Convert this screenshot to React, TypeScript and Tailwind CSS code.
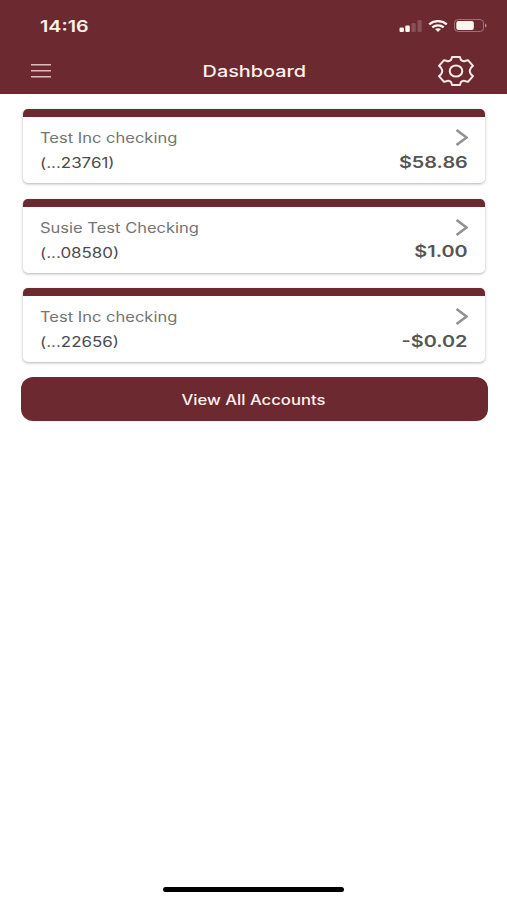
import { ReactNode } from 'react';

type Account = {
    name: string;
    number: string;
    balance: string;
};

const accounts: Account[] = [
    { name: 'Test Inc checking', number: '(...23761)', balance: '$58.86' },
    { name: 'Susie Test Checking', number: '(...08580)', balance: '$1.00' },
    { name: 'Test Inc checking', number: '(...22656)', balance: '-$0.02' },
];

function Signal() {
    return (
        <svg className="h-3 w-[23px]" viewBox="0 0 23 12" fill="#fff4ef">
            <rect x="0.5" y="7.5" width="4.5" height="4.5" rx="1.2" />
            <rect x="6.3" y="5.5" width="4.5" height="6.5" rx="1.2" />
            <rect x="12.5" y="3" width="4.2" height="9" rx="1.2" opacity="0.2" />
            <rect x="18.5" y="0" width="4.2" height="12" rx="1.2" opacity="0.2" />
        </svg>
    );
}

function Wifi() {
    return (
        <svg className="h-3 w-5" viewBox="0 0 20 12" fill="none" stroke="#fff4ef" strokeWidth="2.3">
            <path d="M1.2 4.4C6 0 14 0 18.8 4.4" />
            <path d="M4.3 7.4C7.4 4.6 12.6 4.6 15.7 7.4" />
            <path d="M7 9.1C8.8 7.8 11.2 7.8 13 9.1L10 12Z" fill="#fff4ef" stroke="none" />
        </svg>
    );
}

function Battery() {
    return (
        <svg className="h-[13px] w-[33px]" viewBox="0 0 33 13">
            <rect x="0.5" y="0.5" width="29" height="12" rx="3.5" fill="none" stroke="#fff4ef" opacity="0.35" />
            <rect x="2.3" y="2" width="17.5" height="9" rx="2" fill="#fff4ef" />
            <path d="M31 4.5C33 5.3 33 7.7 31 8.5Z" fill="#fff4ef" opacity="0.5" />
        </svg>
    );
}

function Gear() {
    return (
        <svg className="h-[30px] w-9" viewBox="0 0 36 30" fill="none" stroke="#fbeae6" strokeWidth="2" strokeLinejoin="round">
            <path d="M14 1h8l.8 2.8Q25 6 27.5 4.8L30 4.2 35 9.800 33 11.8Q30.5 15 33 18.2L35 20.2 30 25.8 27.5 25.2Q25 24 22.8 26.2L22 29h-8l-.8-2.8Q11 24 8.5 25.2L6 25.8 1 20.2 3 18.2Q5.5 15 3 11.8L1 9.8 6 4.2 8.5 4.8Q11 6 13.2 3.8Z" />
            <ellipse cx="18" cy="15" rx="6.3" ry="5.5" />
        </svg>
    );
}

function AccountCard({ name, number, balance }: Account) {
    return (
        <button className="h-[74px] w-full overflow-hidden rounded-[5px] border-t-8 border-[#6c2930] bg-white pl-[17.5px] pr-[17.5px] text-left shadow-[0_1px_3px_rgba(0,0,0,0.3)]">
            <div className="flex h-5 items-center justify-between">
                <span className="origin-left scale-x-[1.18] whitespace-nowrap text-[14px] text-[#747474]">{name}</span>
                <svg className="h-[17px] w-[13px]" viewBox="0 0 13 17" fill="none" stroke="#929292" strokeWidth="2.6">
                    <path d="M1.5 1 11.5 8.5 1.5 16" />
                </svg>
            </div>
            <div className="mt-[5px] flex h-5 items-center justify-between">
                <span className="origin-left scale-x-[1.21] text-[14px] text-[#4c4c4c]">{number}</span>
                <span className="origin-right scale-x-[1.28] text-[15.5px] font-semibold text-[#555]">{balance}</span>
            </div>
        </button>
    );
}

function Header({ children }: { children: ReactNode }) {
    return (
        <header className="h-[93.5px] shrink-0 bg-[#6c2930] text-[#fff0eb]">
            <div className="flex h-[51px] items-center justify-between pl-[39.5px] pr-5">
                <span className="origin-left scale-x-[1.23] text-[16px] font-semibold">14:16</span>
                <div className="flex items-center gap-1.5">
                    <Signal />
                    <Wifi />
                    <Battery />
                </div>
            </div>
            <div className="grid h-10 grid-cols-3 items-center pl-[31px] pr-[33px]">{children}</div>
        </header>
    );
}

export default function App() {
    return (
        <div className="flex h-screen flex-col bg-white font-['Inter',sans-serif]">
            <Header>
                <button aria-label="Menu">
                    <svg className="h-[15px] w-5" viewBox="0 0 20 15" stroke="#dfbcb9" strokeWidth="1.5">
                        <path d="M0 0.75h20M0 6.75h20M0 12.75h20" />
                    </svg>
                </button>
                <h1 className="translate-x-[1.5px] scale-x-[1.24] text-center text-[16px] font-[550]">Dashboard</h1>
                <button aria-label="Settings" className="justify-self-end">
                    <Gear />
                </button>
            </Header>

            <main className="flex flex-col pl-[22.5px] pr-[22px] pt-[15.5px]">
                <div className="flex flex-col gap-[15.5px]">
                    {accounts.map((account) => (
                        <AccountCard key={account.number} {...account} />
                    ))}
                </div>
                <button className="-ml-0.5 -mr-[2.5px] mt-[15px] flex h-11 items-center justify-center rounded-xl bg-[#6c2930] text-[14px] font-[550] text-[#fff0eb]">
                    <span className="-translate-x-px scale-x-[1.19]">View All Accounts</span>
                </button>
            </main>

            <div className="mx-auto mb-2 mt-auto h-[5px] w-[181px] rounded-full bg-black" />
        </div>
    );
}
